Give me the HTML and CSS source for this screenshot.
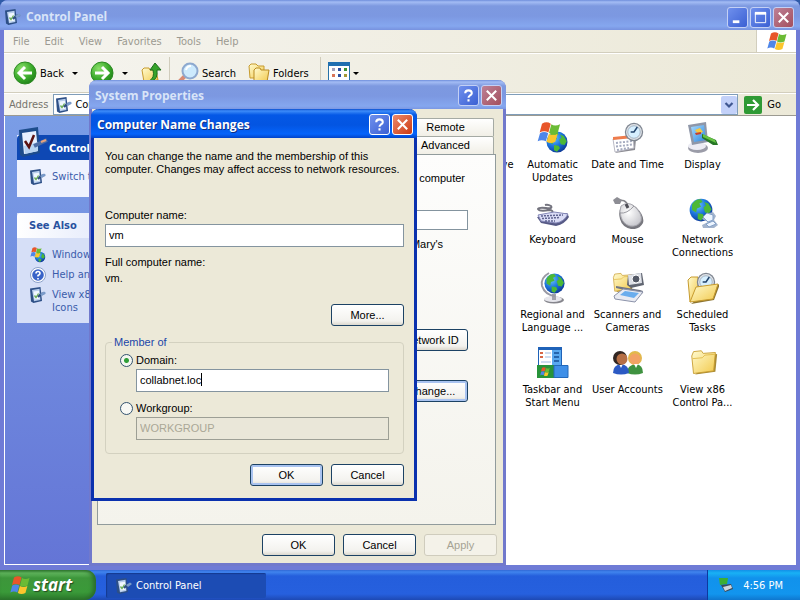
FILE: index.html
```html
<!DOCTYPE html>
<html lang="en">
<head>
  <meta charset="UTF-8" />
  <title>Control Panel</title>
  <link rel="stylesheet" href="styles.css">
</head>
<body>
  <!-- shared icons -->
  <svg class="defs" aria-hidden="true">
    <defs>
      <linearGradient id="paper" x1="0" y1="0" x2="1" y2="1">
        <stop offset="0" stop-color="#fffbd0" /><stop offset="1" stop-color="#f2c94c" />
      </linearGradient>
      <radialGradient id="sea" cx=".35" cy=".3" r=".8">
        <stop offset="0" stop-color="#6cc4ff" /><stop offset=".5" stop-color="#1b74dc" /><stop offset="1" stop-color="#0b2f8a" />
      </radialGradient>
      <radialGradient id="leaf" cx=".35" cy=".3" r=".8">
        <stop offset="0" stop-color="#8be06a" /><stop offset=".6" stop-color="#38a829" /><stop offset="1" stop-color="#1c7a17" />
      </radialGradient>
      <radialGradient id="shell" cx=".4" cy=".4" r=".7">
        <stop offset="0" stop-color="#ffffff" /><stop offset="1" stop-color="#c4c4ca" />
      </radialGradient>
      <linearGradient id="screen" x1="0" y1="0" x2="1" y2="1">
        <stop offset="0" stop-color="#a8dcff" /><stop offset="1" stop-color="#2c84dd" />
      </linearGradient>
    </defs>
    <symbol id="i-flag" viewBox="0 0 20 18">
      <path fill="#e8562a" d="M4 1.500q4-2.500 7.500 0l-2 7.500q-3.500-2-7.500 0z" />
      <path fill="#6bbb35" d="M12 2q3 2 7.500 0l-2 7.500q-4.500 2-7.500 0z" />
      <path fill="#4f86e8" d="M2.300 9.600q3.500-2 7 0l-2 7q-3.500-2-7 0z" />
      <path fill="#fbc52d" d="M9.900 10q3.500 2 7.500 0l-2 7q-4 2-7.500 0z" />
    </symbol>
    <symbol id="i-panel" viewBox="0 0 16 16">
      <path fill="#2d4f86" d="M0 1.500L10.500 0 12 14l-8.500 2L1 14.500z" />
      <path fill="#b9cfee" d="M2 3l7.500-1.200.9 11.200-6.400 1.200z" />
      <path fill="#f0f8ff" d="M3.500 4.500l5.500-.8.6 8-5 .9z" />
      <path fill="none" stroke="#6aae55" stroke-width="1.300" d="M4.500 8.500l1.500 2L8.500 6.500" />
      <path fill="none" stroke="#2f4e7e" stroke-width="2.200" d="M8 10l3-3 4-1" />
      <path fill="#7b9ccb" d="M10 7l4-2.500L16 6l-4 3z" />
    </symbol>
    <symbol id="i-check" viewBox="0 0 32 32">
      <path fill="#1d4d8c" d="M2 4l19-3 2 26-17 4-3-2z" />
      <path fill="#e6f1ff" d="M5 7l14-2 2 20-14 3z" />
      <path fill="#b7d4f2" d="M7 20l14-4v9l-13 3z" />
      <path fill="none" stroke="#5b1310" stroke-width="2.500" d="M8 15l4 6 5-12" />
      <path fill="none" stroke="#4c6ca5" stroke-width="4" d="M17 20l13-6" />
      <path fill="none" stroke="#e6a27c" stroke-width="2" d="M24 16l5-2" />
    </symbol>
    <symbol id="i-world" viewBox="0 0 32 32">
      <circle cx="16" cy="16" r="14" fill="url(#sea)" />
      <path fill="#4cb836" d="M5 9q5-7 11-6l2 3-4 2 2 4-5 2-1 5-5-3zM20 6l5 2 4 7-3 5-5-1-2-6 3-3zM12 20l6 1 2 3-4 5-4-2z" />
    </symbol>
    <symbol id="i-folder" viewBox="0 0 32 32">
      <path fill="#a88a35" d="M6 29l23-3 2-20-3-1z" />
      <path fill="url(#paper)" stroke="#c79b2e" d="M2 8l2-5 9-1 2 3 14-1-2 21-23 3z" />
      <path fill="none" stroke="#e0b848" d="M3 11l11-1 3-3 12-1" />
    </symbol>
    <symbol id="i-clock" viewBox="0 0 24 24">
      <circle cx="12" cy="12" r="11" fill="#7f8691" />
      <circle cx="12" cy="12" r="9.500" fill="#e1e5ea" />
      <circle cx="12" cy="12" r="7.500" fill="#d6efff" stroke="#9aa8b8" />
      <path fill="none" stroke="#22436b" stroke-width="1.800" d="M16 6l-4 6H8" />
    </symbol>
    <symbol id="i-help" viewBox="0 0 16 16">
      <circle cx="8" cy="8" r="7.500" fill="#fff" stroke="#8ba0c8" />
      <circle cx="8" cy="8" r="5.800" fill="#3863c8" />
      <path fill="none" stroke="#fff" stroke-width="1.600" d="M6 6.500q0-2 2-2t2 2q0 1-2 2v1M8 11v1.500" />
    </symbol>
    <symbol id="i-question" viewBox="0 0 16 16">
      <path fill="none" stroke="#fff" stroke-width="2.200" d="M4.500 5.500q0-3 3.500-3t3.500 3q0 1.500-2 2.500-1.500 1-1.500 2.500M8 12v2.500" />
    </symbol>
    <symbol id="i-close" viewBox="0 0 16 16">
      <path stroke="#fff" stroke-width="2.200" d="M3 3l10 10M13 3L3 13" />
    </symbol>
    <symbol id="i-update" viewBox="0 0 32 32">
      <use href="#i-world" x="8" y="8" width="24" height="24" />
      <use href="#i-flag" x="0" y="0" width="24" height="21" />
    </symbol>
  </svg>

  <main class="desktop">
    <section class="window explorer">
      <header class="titlebar">
        <svg class="icon16"><use href="#i-panel" /></svg>
        <h1>Control Panel</h1>
        <button class="cap" aria-label="Minimize"><svg viewBox="0 0 16 16"><path fill="#fff" d="M3 11h7v3H3z" /></svg></button>
        <button class="cap" aria-label="Maximize"><svg viewBox="0 0 16 16"><path fill="none" stroke="#fff" d="M2.500 3v10.500h11V3" /><path fill="#fff" d="M2 2h12v3H2z" /></svg></button>
        <button class="cap close" aria-label="Close"><svg><use href="#i-close" /></svg></button>
      </header>

      <nav class="menubar">
        <button>File</button>
        <button>Edit</button>
        <button>View</button>
        <button>Favorites</button>
        <button>Tools</button>
        <button>Help</button>
        <span class="brand"><svg><use href="#i-flag" /></svg></span>
      </nav>

      <div class="toolbar">
        <button class="back">
          <svg class="round" viewBox="0 0 24 24"><circle cx="12" cy="12" r="11" fill="url(#leaf)" stroke="#2c8a22" /><path fill="none" stroke="#fff" stroke-width="3" d="M19 12H7M12 6l-6 6 6 6" /></svg>
          Back <i class="drop"></i>
        </button>
        <button class="forward" aria-label="Forward">
          <svg class="round" viewBox="0 0 24 24"><circle cx="12" cy="12" r="11" fill="url(#leaf)" stroke="#2c8a22" /><path fill="none" stroke="#fff" stroke-width="3" d="M5 12h12M12 6l6 6-6 6" /></svg>
          <i class="drop"></i>
        </button>
        <button aria-label="Up">
          <svg class="tool" viewBox="0 0 22 22"><path fill="url(#paper)" stroke="#c79b2e" d="M2 8l2-2h5l1 2h6l2 10-14 2z" /><path fill="#36a32b" stroke="#1c6e1c" d="M9 19q6-3 4-11h-3l5-7 6 7h-4q1 9-5 11z" /></svg>
        </button>
        <i class="sep"></i>
        <button class="search">
          <svg class="tool" viewBox="0 0 22 22"><path stroke="#d98b75" stroke-width="4" d="M1 21l7-7" /><circle cx="13" cy="9" r="7.500" fill="#cdeafd" stroke="#8ea9cf" stroke-width="2" /><path fill="none" stroke="#fff" stroke-width="2" d="M9 8q1-4 5-4" /></svg>
          Search
        </button>
        <button class="folders">
          <svg class="tool" viewBox="0 0 22 22"><path fill="url(#paper)" stroke="#c79b2e" d="M1 4l2-2h5l2 2h6v12H2z" /><path fill="url(#paper)" stroke="#b98b22" d="M6 8l2-2h4l1 2h8l-2 12H6z" /></svg>
          Folders
        </button>
        <i class="sep"></i>
        <button class="views" aria-label="Views">
          <svg class="tool" viewBox="0 0 22 22"><path fill="#fff" stroke="#2672a8" d="M.500.500h21v20H.500z" /><path fill="#1f6fb0" d="M0 0h22v4H0z" /><path fill="#a3a0b8" d="M4 6h3v3H4z" /><path fill="#2a4ea0" d="M10 6h3v3h-3zM10 12h3v3h-3z" /><path fill="#3b9433" d="M16 6h3v3h-3z" /><path fill="#d9765a" d="M4 12h3v3H4z" /><path fill="#a59a35" d="M16 12h3v3h-3z" /></svg>
          <i class="drop"></i>
        </button>
      </div>

      <div class="addressbar">
        <label for="address">Address</label>
        <div class="combo">
          <svg class="icon16"><use href="#i-panel" /></svg>
          <input type="text" id="address" value="Control Panel" />
          <button class="combo-drop" aria-label="Show addresses"><svg viewBox="0 0 10 10"><path fill="none" stroke="#3f5791" stroke-width="2.200" d="M1.500 3L5 6.500 8.500 3" /></svg></button>
        </div>
        <button class="go">
          <svg viewBox="0 0 18 18"><rect width="18" height="18" rx="2" fill="#2f9a35" /><path fill="none" stroke="#fff" stroke-width="2.200" d="M3 9h11M9 4l5 5-5 5" /></svg>
          Go
        </button>
      </div>

      <div class="view">
        <aside class="tasks">
          <section class="task-box primary">
            <h2><svg class="icon32"><use href="#i-check" /></svg>Control Panel</h2>
            <ul>
              <li><svg class="icon16"><use href="#i-panel" /></svg><a href="#">Switch to</a></li>
            </ul>
          </section>
          <section class="task-box">
            <h2>See Also</h2>
            <ul>
              <li><svg class="icon16"><use href="#i-update" /></svg><a href="#">Windows</a></li>
              <li><svg class="icon16"><use href="#i-help" /></svg><a href="#">Help and</a></li>
              <li><svg class="icon16"><use href="#i-panel" /></svg><a href="#">View x86<br>Icons</a></li>
            </ul>
          </section>
        </aside>

        <div class="items">
          <a href="#" class="item"><svg><use href="#i-check" /></svg>Administrative</a>
          <a href="#" class="item"><svg><use href="#i-update" /></svg>Automatic Updates</a>
          <a href="#" class="item">
            <svg viewBox="0 0 32 32"><path fill="#8b8b92" d="M3 31l20-3 1-11z" /><path fill="#fff" stroke="#b9b9c4" d="M1 17l20-2 1 11-19 4z" /><path fill="#ee7c4c" d="M1 15l20-2v3L1 18z" /><path stroke="#a4aabf" stroke-dasharray="2 1.500" stroke-width="2" d="M4 21l16-2M4 24.500l16-2M5 28l12-2" /><use href="#i-clock" x="12" y="0" width="20" height="20" /></svg>
            Date and Time
          </a>
          <a href="#" class="item">
            <svg viewBox="0 0 32 32"><ellipse cx="11" cy="26" rx="10" ry="5" fill="#9b9ca8" /><ellipse cx="10" cy="24" rx="9" ry="4" fill="#ececf4" /><path fill="#8f97a9" d="M1 3l18-3 2 20-16 3z" /><path fill="url(#screen)" d="M4 5l13-2 2 15-12 2z" /><path fill="#f7c940" d="M8 8l5-2 3 4-5 2z" /><path fill="#c8402c" d="M8 11l6-1v2l-5 1z" /><path fill="#277626" d="M15 12l14 6 2 5-5 0-11-7z" /><path fill="#66c344" d="M16 12l12 6 1 3-13-6z" /></svg>
            Display
          </a>

          <a href="#" class="item second">
            <svg viewBox="0 0 32 32"><path fill="none" stroke="#73737e" stroke-width="2" d="M15 17q2-4-3-4-9 2-11-1 1-2 8-1 7 1 5-2-3-2-6-1" /><path fill="#565985" d="M0 20l4 6 15 3q9-2 13-9l-2-4z" /><path fill="#dadcf6" stroke="#8487b7" d="M1 18l16-3 14 2q-4 8-12 9l-15-2z" /><path stroke="#5e628f" stroke-dasharray="2 1" stroke-width="1.500" d="M4 19l22-1M5 21.500l18-1M8 24l10 0" /></svg>
            Keyboard
          </a>
          <a href="#" class="item">
            <svg viewBox="0 0 32 32"><path fill="none" stroke="#84848a" stroke-width="1.500" d="M4 4q10-3 12 5" /><path fill="#8d8d94" d="M1 3l4-3 5 3-2 4-5 0z" /><path fill="#77777e" d="M9 10q8-6 15 0 9 9 7 16-4 7-12 6-9-2-11-10-2-7 1-12z" /><path fill="url(#shell)" stroke="#a9a9b0" d="M9 9q7-5 13 0 9 8 7 15-3 6-11 5-7-2-9-9-2-6 0-11z" /><path fill="none" stroke="#9b9ba2" d="M8 16q7 1 14-7" /><path stroke="#4d4d55" stroke-width="3" d="M14 7l2 4" /></svg>
            Mouse
          </a>
          <a href="#" class="item">
            <svg viewBox="0 0 32 32"><use href="#i-world" x="1" y="0" width="26" height="26" /><path fill="#a3b4cd" d="M15 22l4-5 7-2 3 4-2 4 4 5-4 3-11 0-1-3 6-3z" /><path fill="#edf5ff" stroke="#84a1c8" d="M16 20l4-4 6 2 0 5-5 2zM19 27l7-3 3 3-7 3z" /></svg>
            Network Connections
          </a>

          <a href="#" class="item second">
            <svg viewBox="0 0 32 32"><ellipse cx="17" cy="28" rx="10" ry="3.500" fill="#85858c" /><ellipse cx="16" cy="27" rx="9" ry="3" fill="#e6e6ec" /><path fill="#a2a2ac" d="M15 22h4v6h-4z" /><path fill="none" stroke="#9999a4" stroke-width="2" d="M12 1q-9 5-7 13 3 9 13 10" /><use href="#i-world" x="6" y="0" width="23" height="23" /></svg>
            Regional and Language ...
          </a>
          <a href="#" class="item">
            <svg viewBox="0 0 32 32"><use href="#i-folder" x="-1" y="0" width="24" height="22" /><path fill="#606571" d="M16 3l14-2 2 12-13 3-4-3z" /><path fill="#dde0e7" d="M16 3l13-2 1 10-13 2z" /><circle cx="24" cy="7" r="4" fill="#545966" stroke="#fff" /><path fill="#717684" d="M4 14l24 4 3 1-1 3L4 16z" /><path fill="#e9ebf2" stroke="#8c93aa" d="M2 24l9-7 20 3-8 10-20-3z" /><path fill="#6aaded" d="M8 23l5-4 14 2-5 5z" /></svg>
            Scanners and Cameras
          </a>
          <a href="#" class="item">
            <svg viewBox="0 0 32 32"><path fill="url(#paper)" stroke="#c79b2e" d="M1 8l3-3 7 0v20l-8 5z" /><use href="#i-clock" x="9" y="0" width="20" height="20" /><path fill="#8c7430" d="M4 32l23-4 6-16-4 1z" /><path fill="url(#paper)" stroke="#c79b2e" d="M3 30l6-15 22-3-5 15z" /></svg>
            Scheduled Tasks
          </a>

          <a href="#" class="item second">
            <svg viewBox="0 0 32 32"><path fill="#1f62b8" d="M1 0h24v20H1z" /><path fill="#fff" d="M2 3h13v15H2z" /><path fill="#58a8ef" d="M15 3h9v15h-9z" /><path stroke="#d86746" stroke-width="2" d="M3 6h3M3 10h3" /><path stroke="#9ebbe2" stroke-width="1" d="M8 6h6M8 10h6M4 15h10" /><path stroke="#154f98" stroke-width="1.500" d="M17 6h5M17 10h5M17 14h5" /><path fill="#27933a" d="M0 18h17v13H0z" /><path fill="#3e8fe8" stroke="#2268bb" d="M17 18.500h14v12H17z" /><use href="#i-flag" x="3" y="20" width="10" height="9" /></svg>
            Taskbar and Start Menu
          </a>
          <a href="#" class="item">
            <svg viewBox="0 0 32 32"><path fill="#3f9240" d="M15 26q0-8 9-9 7 1 7 9-8 3-16 0z" /><circle cx="23" cy="11" r="7" fill="#e2b94c" /><circle cx="23" cy="12" r="5.500" fill="#f2a265" /><path fill="#2c5ac4" d="M1 26q0-8 8-9 8 1 8 9-8 3-16 0z" /><path fill="#fff" d="M7 17h4l-2 4zM22 17h4l-2 4z" /><circle cx="8" cy="11" r="7" fill="#312622" /><circle cx="10" cy="12" r="5.500" fill="#b66f45" /></svg>
            User Accounts
          </a>
          <a href="#" class="item"><svg viewBox="0 0 32 32"><use href="#i-folder" x="3" y="2" width="28" height="28" /></svg>View x86 Control Pa...</a>
        </div>
      </div>
    </section>

    <section class="window dialog sysprops">
      <header class="titlebar">
        <h1>System Properties</h1>
        <button class="cap" aria-label="Help"><svg><use href="#i-question" /></svg></button>
        <button class="cap close" aria-label="Close"><svg><use href="#i-close" /></svg></button>
      </header>
      <div class="tabs">
        <button class="tab">Remote</button>
        <button class="tab">Advanced</button>
      </div>
      <div class="page">
        <p class="about">computer</p>
        <input type="text" aria-label="Computer description" />
        <p class="hint">"Mary's</p>
        <button class="btn">Network ID</button>
        <button class="btn default">Change...</button>
      </div>
      <footer class="buttons">
        <button class="btn">OK</button>
        <button class="btn">Cancel</button>
        <button class="btn" disabled>Apply</button>
      </footer>
    </section>

    <section class="window dialog active rename">
      <header class="titlebar">
        <h1>Computer Name Changes</h1>
        <button class="cap" aria-label="Help"><svg><use href="#i-question" /></svg></button>
        <button class="cap close" aria-label="Close"><svg><use href="#i-close" /></svg></button>
      </header>
      <form class="rename-form">
        <p class="intro">You can change the name and the membership of this computer. Changes may affect access to network resources.</p>
        <label for="computerName">Computer name:</label>
        <input type="text" id="computerName" value="vm" />
        <p class="full-name">Full computer name:<br>vm.</p>
        <button type="button" class="btn more">More...</button>
        <fieldset>
          <legend>Member of</legend>
          <label class="choice"><input type="radio" name="member" checked />Domain:</label>
          <div class="field">
            <input type="text" aria-label="Domain name" value="collabnet.loc" />
            <span class="caret"></span>
          </div>
          <label class="choice"><input type="radio" name="member" />Workgroup:</label>
          <div class="field">
            <input type="text" aria-label="Workgroup name" value="WORKGROUP" disabled />
          </div>
        </fieldset>
        <div class="buttons">
          <button type="button" class="btn default">OK</button>
          <button type="button" class="btn">Cancel</button>
        </div>
      </form>
    </section>
  </main>

  <footer class="taskbar">
    <button class="start"><svg><use href="#i-flag" /></svg>start</button>
    <button class="task"><svg class="icon16"><use href="#i-panel" /></svg>Control Panel</button>
    <div class="tray">
      <svg class="icon16" viewBox="0 0 16 16"><path fill="#3cae34" d="M1 1l9 0-1 6-7 1z" /><path fill="#3b4a58" d="M3 8l10-1 2 5-8 3z" /><path fill="#cfd6de" d="M5 10l8-2 1 3-7 3z" /></svg>
      <time>4:56 PM</time>
    </div>
  </footer>
</body>
</html>
```

FILE: styles.css
```css
* {
  box-sizing: border-box;
}

html, body {
  margin: 0;
  padding: 0;
  height: 100%;
  overflow: hidden;
}

body {
  display: flex;
  flex-direction: column;
  background: #2f5ba8;
  font-family: 'DejaVu Sans Condensed', 'DejaVu Sans', sans-serif;
  font-size: 11px;
  line-height: 13px;
  color: #000;
}

h1, h2, p, ul {
  margin: 0;
  padding: 0;
}

button, input {
  font: inherit;
  color: inherit;
  margin: 0;
}

button {
  padding: 0;
  border: 0;
  background: none;
  white-space: nowrap;
}

a {
  color: inherit;
  text-decoration: none;
}

svg {
  flex: none;
}

.defs {
  position: absolute;
  width: 0;
  height: 0;
}

.icon16 {
  width: 16px;
  height: 16px;
}

.icon32 {
  width: 32px;
  height: 32px;
}

.desktop {
  position: relative;
  flex: 1;
  min-height: 0;
  display: flex;
}

/* windows */
.window {
  display: flex;
  flex-direction: column;
  background: #6f7bd6;
  border-radius: 8px 8px 0 0;
}

.explorer {
  flex: 1;
  padding: 0 4px 5px;
}

.titlebar {
  display: flex;
  align-items: center;
  gap: 2px;
  flex: none;
  height: 30px;
  margin: 0 -4px;
  padding: 4px 6px 0 5px;
  border-radius: 8px 8px 0 0;
  background: linear-gradient(#6f8edb 0, #a3bcf4 2px, #7d99e0 6px, #7c98e1 16px, #85a7ef 26px, #7792df 30px);
}

.titlebar h1 {
  flex: 1;
  padding-left: 3px;
  font-family: 'Open Sans', sans-serif;
  font-size: 12px;
  line-height: 18px;
  font-weight: bold;
  color: #d8e4f8;
}

.cap {
  display: flex;
  align-items: center;
  justify-content: center;
  width: 21px;
  height: 21px;
  border: 1px solid #c3d0f5;
  border-radius: 3px;
  background: linear-gradient(135deg, #6f90ed, #3b60d3);
}

.cap svg {
  width: 15px;
  height: 15px;
}

.cap.close {
  background: linear-gradient(135deg, #bd8197, #a44f5d);
}

/* explorer bars */
.menubar, .toolbar, .addressbar {
  display: flex;
  flex: none;
  background: linear-gradient(90deg, #f5f4ef, #ece9d8);
}

.menubar {
  height: 23px;
  padding-left: 9px;
  gap: 15px;
  border-bottom: 1px solid #d2cebd;
  color: #9c9a91;
}

.brand {
  display: flex;
  align-items: center;
  justify-content: center;
  width: 40px;
  margin-left: auto;
  background: #fff;
  border-left: 1px solid #d2cebd;
}

.brand svg {
  width: 20px;
  height: 18px;
}

.toolbar {
  align-items: center;
  height: 40px;
  padding-left: 9px;
  border-top: 1px solid #fff;
  border-bottom: 1px solid #d2cebd;
}

.toolbar button {
  display: flex;
  align-items: center;
  gap: 3px;
}

.toolbar .back, .toolbar .forward {
  margin-right: 12px;
}

.toolbar .folders {
  margin: 0 4px 0 12px;
}

.round {
  width: 24px;
  height: 24px;
}

.tool {
  width: 22px;
  height: 22px;
}

.drop {
  margin-left: 5px;
  border: 3px solid transparent;
  border-top-color: #000;
  border-bottom: 0;
}

.views .drop {
  margin-left: 0;
}

.sep {
  width: 1px;
  height: 32px;
  margin: 0 7px;
  background: #d0ccbc;
}

.addressbar {
  align-items: center;
  height: 23px;
  padding: 0 15px 0 5px;
  gap: 5px;
  border-top: 1px solid #fff;
  border-bottom: 1px solid #9c9a91;
}

.addressbar label {
  color: #77756d;
}

.combo {
  display: flex;
  align-items: center;
  flex: 1;
  min-width: 0;
  height: 21px;
  padding-left: 2px;
  background: #fff;
  border: 1px solid #7f9db9;
}

.combo input {
  flex: 1;
  min-width: 0;
  border: 0;
  padding: 0 3px;
  background: none;
}

.combo-drop {
  display: flex;
  align-items: center;
  justify-content: center;
  width: 16px;
  height: 18px;
  border-radius: 2px;
  background: #c3d1f9;
}

.combo-drop svg {
  width: 10px;
  height: 10px;
}

.go {
  display: flex;
  align-items: center;
  gap: 5px;
  margin-left: 1px;
}

.go svg {
  width: 18px;
  height: 18px;
}

/* explorer contents */
.view {
  display: flex;
  flex: 1;
  min-height: 0;
  background: #fff;
}

.tasks {
  flex: none;
  width: 210px;
  padding: 19px 13px 0 12px;
  border: solid #fff;
  border-width: 0 0 1px 1px;
  background: linear-gradient(#7a9de6, #6475d6);
}

.task-box {
  margin-bottom: 16px;
  background: #d6dff7;
  color: #3a5cab;
}

.task-box h2 {
  display: flex;
  align-items: center;
  height: 25px;
  padding-left: 12px;
  font-size: 11px;
  font-weight: bold;
  background: linear-gradient(90deg, #fff, #c6d3f7);
  border-radius: 4px 4px 0 0;
  color: #28519f;
}

.task-box.primary h2 {
  align-items: flex-end;
  padding: 0 0 5px;
  background: #0e48b4;
  color: #fff;
}

.primary h2 svg {
  margin-bottom: -3px;
}

.task-box.primary {
  background: #eef2fe;
}

.task-box ul {
  list-style: none;
  padding: 9px 12px 5px 13px;
}

.task-box li {
  display: flex;
  gap: 6px;
  margin-bottom: 4px;
}

.task-box a {
  padding-top: 1px;
}

.task-box.primary ul {
  padding-bottom: 8px;
}

.items {
  flex: 1;
  display: grid;
  grid-template-columns: repeat(4, 75px);
  grid-auto-rows: 75px;
  justify-content: end;
  padding: 6px 56px 0 0;
}

.item {
  display: flex;
  flex-direction: column;
  align-items: center;
  gap: 4px;
  text-align: center;
}

.item.second {
  grid-column: 2;
}

.item svg {
  width: 32px;
  height: 32px;
}

/* dialogs */
.dialog {
  position: absolute;
  padding: 0 3px 3px;
  font-family: 'Liberation Sans', Arial, sans-serif;
}

.dialog .titlebar {
  height: 29px;
  margin: 0 -3px;
  padding: 2px 4px 0 3px;
}

.sysprops {
  left: 89px;
  top: 80px;
  width: 417px;
  height: 486px;
  background: linear-gradient(#ece9d8, #ece9d8) content-box, #7179cc;
}

.tabs {
  display: flex;
  flex-direction: column;
  align-items: flex-end;
  padding: 9px 9px 0;
}

.tab {
  width: 97px;
  height: 18px;
  background: linear-gradient(#fff, #f1efe6);
  border: 1px solid #a5aaa4;
  border-bottom: 0;
  border-radius: 2px 2px 0 0;
}

.page {
  display: flex;
  flex-direction: column;
  align-items: flex-end;
  flex: 1;
  margin: 0 7px 0 5px;
  padding: 17px 27px 0 0;
  background: linear-gradient(#fdfdfc, #f4f3ec);
  border: 1px solid #919b9c;
}

.about {
  margin: 0 3px 25px 0;
}

.hint {
  margin: 8px 25px 49px 0;
}

.page .btn {
  margin-top: 29px;
}

.buttons {
  display: flex;
  justify-content: flex-end;
  gap: 8px;
}

.sysprops > .buttons {
  padding: 9px 6px 7px;
}

.btn {
  width: 73px;
  height: 22px;
  border: 1px solid #1c4264;
  border-radius: 3px;
  background: linear-gradient(#fff, #f3f2ee 80%, #dcd8ce);
}

.btn.default {
  box-shadow: inset 0 0 0 2px #a9c3f0;
}

.btn:disabled {
  border-color: #cfccbd;
  background: #f4f2e9;
  color: #a5a293;
}

.dialog input[type="text"] {
  height: 23px;
  padding: 0 3px 2px;
  background: #fff;
  border: 1px solid #84949f;
}

.dialog input[type="text"]:disabled {
  background: #eae7d9;
  border-color: #9d9f95;
  color: #aaa797;
}

.dialog .page input[type="text"] {
  width: 200px;
  height: 20px;
}

.rename {
  left: 91px;
  top: 109px;
  width: 326px;
  background: linear-gradient(#ece9d8, #ece9d8) content-box, #0a31ae;
}

.active .titlebar {
  background: linear-gradient(#0a4fd0 0, #3d8cf9 2px, #0458e6 6px, #0355e2 16px, #0564fb 25px, #0243c9 29px);
}

.active .titlebar h1 {
  color: #fff;
  text-shadow: 1px 1px #0f2f82;
}

.active .cap {
  border-color: #fff;
}

.active .cap.close {
  background: linear-gradient(135deg, #ec8a6c, #cd3a12);
}

.rename-form {
  display: flex;
  flex-direction: column;
  padding: 12px 10px 12px 11px;
}

.intro {
  margin-bottom: 33px;
}

.rename-form > input {
  margin: 2px 0 7px;
}

.full-name {
  line-height: 16px;
}

.more {
  align-self: flex-end;
  margin: 18px 0 10px;
}

fieldset {
  margin: 0 0 10px;
  padding: 5px 14px 13px;
  border: 1px solid #d3d1c0;
  border-radius: 4px;
  min-width: 0;
}

legend {
  margin-left: -8px;
  padding: 0 2px;
  color: #1b46a8;
}

.choice {
  display: flex;
  align-items: center;
  gap: 3px;
}

.choice input {
  appearance: none;
  width: 13px;
  height: 13px;
  border: 1px solid #33536f;
  border-radius: 50%;
  background: #f8f8f4;
}

.choice input:checked {
  background: radial-gradient(circle, #2f9e37 2px, #f4f6f0 3px);
}

.field {
  position: relative;
  display: flex;
  margin: 2px 0 10px 16px;
}

.field:last-child {
  margin-bottom: 0;
}

.field input {
  flex: 1;
  min-width: 0;
}

.caret {
  position: absolute;
  left: 65px;
  top: 4px;
  width: 1px;
  height: 13px;
  background: #000;
}

/* taskbar */
.taskbar {
  display: flex;
  flex: none;
  height: 30px;
  background: linear-gradient(#3168d5 0, #4084ee 2px, #245edc 6px, #2660de 24px, #1d49b4 30px);
  color: #fff;
}

.start {
  display: flex;
  align-items: center;
  gap: 3px;
  width: 96px;
  padding-left: 10px;
  border-radius: 0 10px 12px 0;
  background: linear-gradient(#357f34 0, #5fb55c 3px, #3d963b 8px, #3a9a39 22px, #2b772b 30px);
  box-shadow: inset -3px 0 4px #2a6b2b;
  font-family: 'Open Sans', sans-serif;
  font-size: 17px;
  line-height: 20px;
  font-weight: bold;
  font-style: italic;
  text-shadow: 1px 1px 1px #234b22;
}

.start svg {
  width: 20px;
  height: 18px;
}

.task {
  display: flex;
  align-items: center;
  gap: 4px;
  width: 160px;
  height: 25px;
  margin: 3px 0 0 10px;
  padding-left: 10px;
  border-radius: 2px;
  background: #1c4cb4;
  box-shadow: inset 1px 1px 1px #153a8f;
}

.tray {
  display: flex;
  align-items: center;
  gap: 9px;
  margin-left: auto;
  padding: 0 17px 0 10px;
  border-left: 1px solid #0c3aa0;
  background: linear-gradient(#1290e8 0, #19b1f5 3px, #1192ec 8px, #1295ee 24px, #0f77cf 30px);
}
```
